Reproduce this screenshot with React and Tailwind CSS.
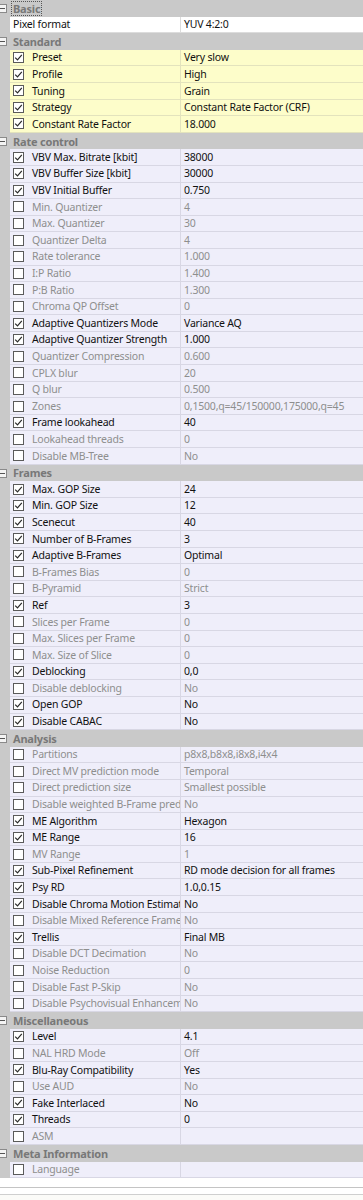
import React from "react";

const sections = [
  {
    title: "Basic",
    focus: true,
    tone: "white",
    items: [{ label: "Pixel format", value: "YUV 4:2:0", nocheck: true, on: true }],
  },
  {
    title: "Standard",
    tone: "yellow",
    items: [
      ["Preset", "Very slow", 1],
      ["Profile", "High", 1],
      ["Tuning", "Grain", 1],
      ["Strategy", "Constant Rate Factor (CRF)", 1],
      ["Constant Rate Factor", "18.000", 1],
    ],
  },
  {
    title: "Rate control",
    tone: "lav",
    items: [
      ["VBV Max. Bitrate [kbit]", "38000", 1],
      ["VBV Buffer Size [kbit]", "30000", 1],
      ["VBV Initial Buffer", "0.750", 1],
      ["Min. Quantizer", "4", 0],
      ["Max. Quantizer", "30", 0],
      ["Quantizer Delta", "4", 0],
      ["Rate tolerance", "1.000", 0],
      ["I:P Ratio", "1.400", 0],
      ["P:B Ratio", "1.300", 0],
      ["Chroma QP Offset", "0", 0],
      ["Adaptive Quantizers Mode", "Variance AQ", 1],
      ["Adaptive Quantizer Strength", "1.000", 1],
      ["Quantizer Compression", "0.600", 0],
      ["CPLX blur", "20", 0],
      ["Q blur", "0.500", 0],
      ["Zones", "0,1500,q=45/150000,175000,q=45", 0],
      ["Frame lookahead", "40", 1],
      ["Lookahead threads", "0", 0],
      ["Disable MB-Tree", "No", 0],
    ],
  },
  {
    title: "Frames",
    tone: "lav",
    items: [
      ["Max. GOP Size", "24", 1],
      ["Min. GOP Size", "12", 1],
      ["Scenecut", "40", 1],
      ["Number of B-Frames", "3", 1],
      ["Adaptive B-Frames", "Optimal", 1],
      ["B-Frames Bias", "0", 0],
      ["B-Pyramid", "Strict", 0],
      ["Ref", "3", 1],
      ["Slices per Frame", "0", 0],
      ["Max. Slices per Frame", "0", 0],
      ["Max. Size of Slice", "0", 0],
      ["Deblocking", "0,0", 1],
      ["Disable deblocking", "No", 0],
      ["Open GOP", "No", 1],
      ["Disable CABAC", "No", 1],
    ],
  },
  {
    title: "Analysis",
    tone: "lav",
    items: [
      ["Partitions", "p8x8,b8x8,i8x8,i4x4", 0],
      ["Direct MV prediction mode", "Temporal", 0],
      ["Direct prediction size", "Smallest possible", 0],
      ["Disable weighted B-Frame prediction", "No", 0],
      ["ME Algorithm", "Hexagon", 1],
      ["ME Range", "16", 1],
      ["MV Range", "1", 0],
      ["Sub-Pixel Refinement", "RD mode decision for all frames", 1],
      ["Psy RD", "1.0,0.15", 1],
      ["Disable Chroma Motion Estimation", "No", 1],
      ["Disable Mixed Reference Frames", "No", 0],
      ["Trellis", "Final MB", 1],
      ["Disable DCT Decimation", "No", 0],
      ["Noise Reduction", "0", 0],
      ["Disable Fast P-Skip", "No", 0],
      ["Disable Psychovisual Enhancements", "No", 0],
    ],
  },
  {
    title: "Miscellaneous",
    tone: "lav",
    items: [
      ["Level", "4.1", 1],
      ["NAL HRD Mode", "Off", 0],
      ["Blu-Ray Compatibility", "Yes", 1],
      ["Use AUD", "No", 0],
      ["Fake Interlaced", "No", 1],
      ["Threads", "0", 1],
      ["ASM", "", 0],
    ],
  },
  {
    title: "Meta Information",
    tone: "lav",
    items: [["Language", "", 0]],
  },
];

function Check({ on }) {
  return (
    <div className="w-[11px] h-[11px] shrink-0 border border-[#5a5a5a] bg-white flex items-center justify-center">
      {on ? (
        <svg width="9" height="9" viewBox="0 0 9 9">
          <polyline points="1.2,4.6 3.5,6.9 7.8,1.8" fill="none" stroke="#2a2a2a" strokeWidth="1.2" />
        </svg>
      ) : null}
    </div>
  );
}

function Header({ title, focus }) {
  return (
    <div className="h-[16.6px] bg-[#c9c9c9] flex items-center relative">
      <div className="absolute left-[-2px] top-[4px] w-[9px] h-[9px] border border-[#8a8a8a] bg-[#f4f4f4] flex items-center justify-center">
        <div className="w-[5px] h-[1px] bg-[#555]" />
      </div>
      <div
        className={
          "ml-[11px] px-[1px] leading-[13px] text-[11px] font-bold text-[#787878] " +
          (focus ? "border border-dotted border-[#555]" : "border border-transparent")
        }
      >
        {title}
      </div>
    </div>
  );
}

function Row({ label, value, on, nocheck, tone }) {
  const bg =
    tone === "yellow" ? "bg-[#fdfdca]" : tone === "white" ? "bg-white" : "bg-[#efeefa]";
  const line =
    tone === "yellow" ? "border-[#e3e3bd]" : tone === "white" ? "border-[#dcdcdc]" : "border-[#d8d7e4]";
  const txt = on ? "text-[#111]" : "text-[#8e8e8e]";
  return (
    <div className="h-[16.6px] bg-[#c9c9c9] flex">
      <div className={"ml-[10px] flex-1 flex border-b " + bg + " " + line}>
        <div className={"w-[171px] shrink-0 flex items-center overflow-hidden whitespace-nowrap border-r " + line}>
          {nocheck ? (
            <span className={"ml-[3px] " + txt}>{label}</span>
          ) : (
            <>
              <div className="ml-[3px]">
                <Check on={on} />
              </div>
              <span className={"ml-[8px] " + txt}>{label}</span>
            </>
          )}
        </div>
        <div className={"flex-1 flex items-center overflow-hidden whitespace-nowrap pl-[3px] " + txt}>{value}</div>
      </div>
    </div>
  );
}

export default function App() {
  return (
    <div className="w-[363px] h-[1200px] overflow-hidden bg-white font-['Noto_Sans',sans-serif] text-[10.5px] tracking-[-0.2px] leading-none">
      {sections.map((s) => (
        <div key={s.title}>
          <Header title={s.title} focus={s.focus} />
          {s.items.map((it, i) => {
            const item = Array.isArray(it) ? { label: it[0], value: it[1], on: !!it[2] } : it;
            return <Row key={i} {...item} tone={s.tone} />;
          })}
        </div>
      ))}
      <div className="h-[9px] bg-white" />
      <div className="h-[1px] bg-[#c4c4c4]" />
      <div className="h-[6px] bg-white" />
      <div className="h-[1px] bg-[#cfcfcf]" />
      <div className="h-[40px] bg-[#fbfbf8]" />
    </div>
  );
}
